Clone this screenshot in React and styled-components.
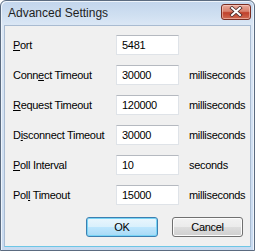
import React from "react";
import styled, { createGlobalStyle } from "styled-components";

const Global = createGlobalStyle`
  html, body { margin: 0; padding: 0; background: #ffffff; }
  body { font-family: "Liberation Sans", Arial, sans-serif; }
`;

const Window = styled.div`
  box-sizing: border-box;
  width: 255px;
  height: 251px;
  border: 1px solid #5b6b80;
  border-radius: 6px 6px 0 0;
  background: linear-gradient(#c2d5ec 0px, #cfdff1 14px, #dbe7f5 24px, #c8daf0 100%);
  box-shadow: inset 1px 1px 0 #eef4fb, inset -1px 0 0 #eef4fb;
  display: flex;
  flex-direction: column;
  padding: 0 3px 3px 3px;
`;

const TitleBar = styled.div`
  height: 24px;
  display: flex;
  align-items: center;
  justify-content: space-between;
  padding-left: 4px;
  flex: none;
`;

const Title = styled.div`
  font-family: "Liberation Sans", Arial, sans-serif;
  font-size: 12px;
  color: #1e1e1e;
  padding-bottom: 1px;
`;

const CloseButton = styled.div`
  width: 30px;
  height: 16px;
  margin-top: -3px;
  box-sizing: border-box;
  border: 1px solid #7a2d22;
  border-radius: 3px;
  background: linear-gradient(#e9a99b 0%, #d8806c 45%, #c0412b 55%, #cf6a52 100%);
  box-shadow: inset 0 0 0 1px rgba(255, 220, 210, 0.5);
  display: flex;
  align-items: center;
  justify-content: center;
`;

const Client = styled.div`
  flex: 1;
  background: #f0f0f0;
  border: 1px solid #a9bbd1;
  border-bottom-color: #6dc6e6;
  padding: 9px 7px 0 8px;
  display: flex;
  flex-direction: column;
  font-size: 11px;
  letter-spacing: -0.3px;
  color: #000;
`;

const Form = styled.div`
  display: grid;
  grid-template-columns: 93px 63px minmax(0, 1fr);
  column-gap: 10px;
  row-gap: 10px;
  align-items: center;
`;

const Label = styled.div`
  white-space: nowrap;
  min-width: 0;
`;

const Key = styled.span`
  text-decoration: underline;
  text-underline-offset: 1px;
`;

const Field = styled.div`
  box-sizing: border-box;
  height: 20px;
  border: 1px solid #dfe3e8;
  border-top-color: #b5b9c0;
  background: #fff;
  padding-left: 5px;
  display: flex;
  align-items: center;
`;

const Unit = styled.div`
  white-space: nowrap;
`;

const Buttons = styled.div`
  display: flex;
  justify-content: flex-end;
  gap: 14px;
  margin-top: 12px;
`;

const Button = styled.div`
  box-sizing: border-box;
  width: ${(p) => (p.$default ? "72px" : "71px")};
  height: 20px;
  border: 1px solid ${(p) => (p.$default ? "#3c7fb1" : "#707070")};
  border-radius: 3px;
  background: ${(p) =>
    p.$default
      ? "linear-gradient(#eaf6fd 0%, #d9f0fc 50%, #bee6fd 51%, #a7d9f5 100%)"
      : "linear-gradient(#f2f2f2 0%, #ebebeb 50%, #dddddd 51%, #cfcfcf 100%)"};
  box-shadow: inset 0 0 0 1px ${(p) => (p.$default ? "#78d4f5" : "#fcfcfc")};
  display: flex;
  align-items: center;
  justify-content: center;
`;

const rows = [
  { label: ["", "P", "ort"], value: "5481", unit: "" },
  { label: ["Conn", "e", "ct Timeout"], value: "30000", unit: "milliseconds" },
  { label: ["", "R", "equest Timeout"], value: "120000", unit: "milliseconds" },
  { label: ["D", "i", "sconnect Timeout"], value: "30000", unit: "milliseconds" },
  { label: ["", "P", "oll Interval"], value: "10", unit: "seconds" },
  { label: ["Pol", "l", " Timeout"], value: "15000", unit: "milliseconds" },
];

export default function App() {
  return (
    <>
      <Global />
      <Window>
        <TitleBar>
          <Title>Advanced Settings</Title>
          <CloseButton>
            <svg width="14" height="11" viewBox="0 0 14 11">
              <path d="M3 2 L11 9 M11 2 L3 9" stroke="#4a2a28" strokeWidth="3.6" strokeLinecap="square" />
              <path d="M3 2 L11 9 M11 2 L3 9" stroke="#ffffff" strokeWidth="2" strokeLinecap="square" />
            </svg>
          </CloseButton>
        </TitleBar>
        <Client>
          <Form>
            {rows.map((r, i) => (
              <React.Fragment key={i}>
                <Label>
                  {r.label[0]}
                  <Key>{r.label[1]}</Key>
                  {r.label[2]}
                </Label>
                <Field>{r.value}</Field>
                <Unit>{r.unit}</Unit>
              </React.Fragment>
            ))}
          </Form>
          <Buttons>
            <Button $default>OK</Button>
            <Button>Cancel</Button>
          </Buttons>
        </Client>
      </Window>
    </>
  );
}
